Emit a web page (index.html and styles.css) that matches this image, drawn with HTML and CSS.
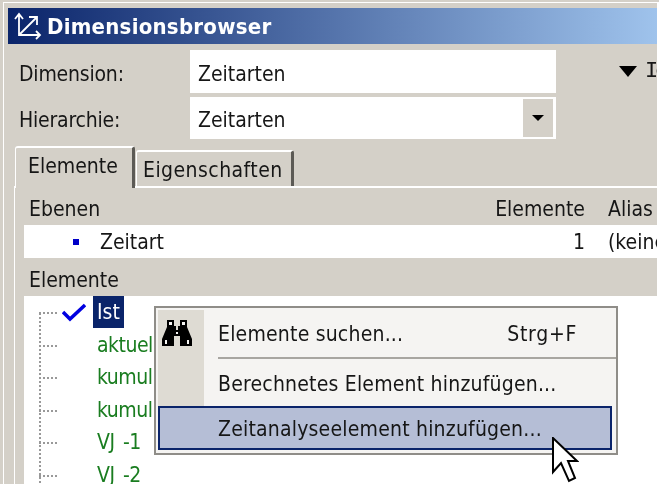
FILE: index.html
```html
<!DOCTYPE html>
<html lang="de">
<head>
  <meta charset="UTF-8" />
  <title>Dimensionsbrowser</title>
  <link rel="stylesheet" href="styles.css">
</head>
<body>
  <div class="screen">
    <div class="edge">
      <div class="window">
        <div class="titlebar">
          <svg class="title-icon" width="28" height="28" viewBox="0 0 28 28" fill="none" stroke="#fff" stroke-width="1.8">
            <path d="M5 2V23H26M1 7L5 2L9 7M22 19L26 23L22 27M5 23L22 6M15 5H23V13"/>
          </svg>
          <span class="title-text">Dimensionsbrowser</span>
        </div>

        <div class="form">
          <label>Dimension:</label>
          <div class="field">Zeitarten</div>
          <div class="extra">
            <span class="extra-arrow"></span>
            <span class="extra-text">Ic</span>
          </div>
          <label>Hierarchie:</label>
          <div class="field combo">
            <span class="combo-text">Zeitarten</span>
            <span class="combo-btn"><span class="combo-arrow"></span></span>
          </div>
        </div>

        <div class="tabs">
          <div class="tab active">Elemente</div>
          <div class="tab">Eigenschaften</div>
        </div>

        <div class="panel">
          <div class="levels-head">
            <span class="col-name">Ebenen</span>
            <span class="col-count">Elemente</span>
            <span class="col-alias">Alias</span>
          </div>
          <div class="levels-row">
            <span class="bullet"></span>
            <span class="col-name">Zeitart</span>
            <span class="col-count">1</span>
            <span class="col-alias">(keine)</span>
          </div>
          <div class="section-head">Elemente</div>
          <ul class="tree">
            <li class="root"><svg class="check" width="24" height="20" viewBox="0 0 24 20" fill="none" stroke="#0000e0" stroke-width="3.5"><path d="M1 9L8 16L23 2"/></svg><span class="selected">Ist</span></li>
            <li class="calc">aktuell</li>
            <li class="calc">kumuliert</li>
            <li class="calc">kumuliert</li>
            <li class="calc">VJ -1</li>
            <li class="calc">VJ -2</li>
          </ul>
        </div>
      </div>
    </div>
  </div>

  <div class="menu">
    <div class="menu-item first">
      <span class="menu-icon">
        <svg width="32" height="28" viewBox="0 0 32 28" fill="#000">
          <path d="M6 1H13V7H15V11H17V7H19V1H26V8L31 20V27H19V17H13V27H1V20L6 8Z"/>
          <path fill="#f5f4f2" d="M8 3H11V6H8ZM21 3H24V6H21ZM15 13H17V15H15ZM4 21H6V25H4ZM26 21H28V25H26Z"/>
        </svg>
      </span>
      <span class="menu-label">Elemente suchen...</span>
      <span class="menu-key">Strg+F</span>
    </div>
    <div class="menu-sep"></div>
    <div class="menu-item second">
      <span class="menu-icon"></span>
      <span class="menu-label">Berechnetes Element hinzufügen...</span>
    </div>
    <div class="menu-item hot">
      <span class="menu-label">Zeitanalyseelement hinzufügen...</span>
    </div>
  </div>

  <svg class="cursor" width="28" height="46" viewBox="0 0 28 46">
    <path d="M2 1V35L10 26L18 44L24 41L17 24L26 24Z" fill="#fff" stroke="#000" stroke-width="2"/>
  </svg>
</body>
</html>
```

FILE: styles.css
```css
* {
  margin: 0;
  padding: 0;
  box-sizing: border-box;
}

html, body {
  height: 100%;
  overflow: hidden;
}

body {
  position: relative;
  background: #ffffff;
  color: #161616;
  font-family: 'DejaVu Sans Condensed', 'DejaVu Sans', sans-serif;
  font-stretch: condensed;
  font-size: 21px;
  filter: blur(0.45px);
}

.screen {
  height: 100%;
  padding-top: 2px;
  background: linear-gradient(#d4d0c8 2px, #ffffff 2px);
  border-left: 3px solid #d4d0c8;
}

.edge {
  width: 654px;
  height: 100%;
  padding: 5px 0 0 4px;
  background: #d4d0c8;
  border-top: 1px solid #ffffff;
  border-left: 1px solid #ffffff;
}

.window {
  height: 100%;
  overflow: hidden;
}

/* Title */
.titlebar {
  display: flex;
  align-items: center;
  gap: 5px;
  height: 36px;
  padding-left: 6px;
  color: #ffffff;
  background: linear-gradient(90deg, #0a246a 0%, #9fc3ec 100%);
}

.title-icon {
  flex: none;
}

.title-text {
  font-size: 22px;
  font-weight: 700;
  letter-spacing: 0.25px;
}

/* Form */
.form {
  display: grid;
  grid-template-columns: 171px 366px auto;
  row-gap: 4px;
  align-items: center;
  padding: 6px 0 0 11px;
}

.form label {
  padding-top: 4px;
  letter-spacing: -0.2px;
}

.field {
  display: flex;
  align-items: center;
  justify-content: space-between;
  height: 43px;
  padding: 4px 3px 0 8px;
  background: #ffffff;
}

.combo {
  height: 42px;
  padding-top: 0;
}

.combo-text {
  padding-top: 4px;
}

.combo-btn {
  display: flex;
  align-items: center;
  justify-content: center;
  width: 30px;
  height: 38px;
  background: #d4d0c8;
}

.combo-arrow {
  border-top: 6px solid #000000;
  border-left: 6px solid transparent;
  border-right: 6px solid transparent;
}

.extra {
  display: flex;
  align-items: center;
  gap: 8px;
  padding-left: 63px;
  white-space: nowrap;
}

.extra-arrow {
  border-top: 11px solid #000000;
  border-left: 9px solid transparent;
  border-right: 9px solid transparent;
}

.extra-text {
  font-family: 'Liberation Mono', monospace;
  font-size: 22px;
  letter-spacing: -3px;
}

/* Tabs */
.tabs {
  display: flex;
  align-items: flex-end;
  height: 47px;
  margin-left: 7px;
}

.tab {
  height: 36px;
  padding: 0 8px 0 6px;
  line-height: 37px;
  letter-spacing: 0.45px;
  background: #d4d0c8;
  border-top: 2px solid #ffffff;
  border-left: 1px solid #ffffff;
  border-right: 3px solid #5c5a55;
  border-radius: 3px 3px 0 0;
}

.tab.active {
  position: relative;
  height: 42px;
  width: 120px;
  margin-right: 1px;
  margin-bottom: -2px;
  padding-left: 12px;
  line-height: 37px;
  letter-spacing: 0;
}

/* Panel below the tabs */
.panel {
  margin-left: 6px;
  border-top: 2px solid #ffffff;
  border-left: 1px solid #ffffff;
  padding-left: 9px;
}

.levels-head, .levels-row {
  display: flex;
  align-items: center;
}

.levels-head {
  height: 36px;
  padding: 5px 0 0 5px;
}

.levels-row {
  height: 33px;
  margin-top: 1px;
  padding-left: 5px;
  background: #ffffff;
}

.col-name {
  flex: 1;
}

.col-count {
  width: 100px;
  text-align: right;
}

.col-alias {
  width: 49px;
  margin-left: 23px;
  overflow: hidden;
  white-space: nowrap;
}

.bullet {
  width: 6px;
  height: 6px;
  margin: 0 21px 0 44px;
  background: #0000c8;
}

.section-head {
  height: 38px;
  padding-left: 5px;
  line-height: 44px;
}

.tree {
  position: relative;
  list-style: none;
  height: 200px;
  padding-left: 15px;
  background: #ffffff;
}

/* Dotted trunk of the tree */
.tree::before {
  content: '';
  position: absolute;
  left: 15px;
  top: 17px;
  bottom: 0;
  width: 2px;
  background: linear-gradient(#999999 50%, transparent 50%) 0 0 / 2px 4px repeat-y;
}

.tree li {
  position: relative;
  display: flex;
  align-items: center;
  height: 32.5px;
  padding-left: 58px;
}

/* Dotted connector of a tree node */
.tree li::before {
  content: '';
  position: absolute;
  left: 0;
  top: 16px;
  width: 18px;
  border-top: 2px dotted #999999;
}

.tree .calc {
  color: #1a7d20;
  letter-spacing: -0.5px;
  word-spacing: 3px;
}

.check {
  position: absolute;
  left: 23px;
  top: 7px;
}

.selected {
  margin-left: -4px;
  padding: 0 4px;
  line-height: 32px;
  color: #ffffff;
  background: #0a246a;
}

/* Context menu */
.menu {
  position: absolute;
  left: 154px;
  top: 306px;
  width: 464px;
  height: 149px;
  padding: 2px 4px 3px 2px;
  background: #f5f4f2;
  border: 2px solid #8f8d88;
}

.menu-item {
  display: flex;
  align-items: center;
}

.menu-icon {
  display: flex;
  justify-content: center;
  flex: none;
  width: 46px;
  height: 100%;
  padding: 9px 8px 0 0;
  background: #dedbd3;
}

.menu-label {
  margin-left: 14px;
  letter-spacing: 0.2px;
}

.first {
  height: 48px;
}

.second {
  height: 48px;
}

.second .menu-label {
  margin-top: 4px;
}

.menu-key {
  margin-left: auto;
  margin-right: 35px;
  letter-spacing: 0.7px;
}

.menu-sep {
  position: absolute;
  left: 62px;
  right: 0;
  top: 49px;
  border-top: 2px solid #a8a6a1;
}

.hot {
  height: 44px;
  padding: 2px 0 0 58px;
  background: #b5bed6;
  border: 2px solid #0a246a;
}

.hot .menu-label {
  margin-left: 0;
}

/* Mouse pointer over the menu */
.cursor {
  position: absolute;
  left: 551px;
  top: 437px;
}
```
